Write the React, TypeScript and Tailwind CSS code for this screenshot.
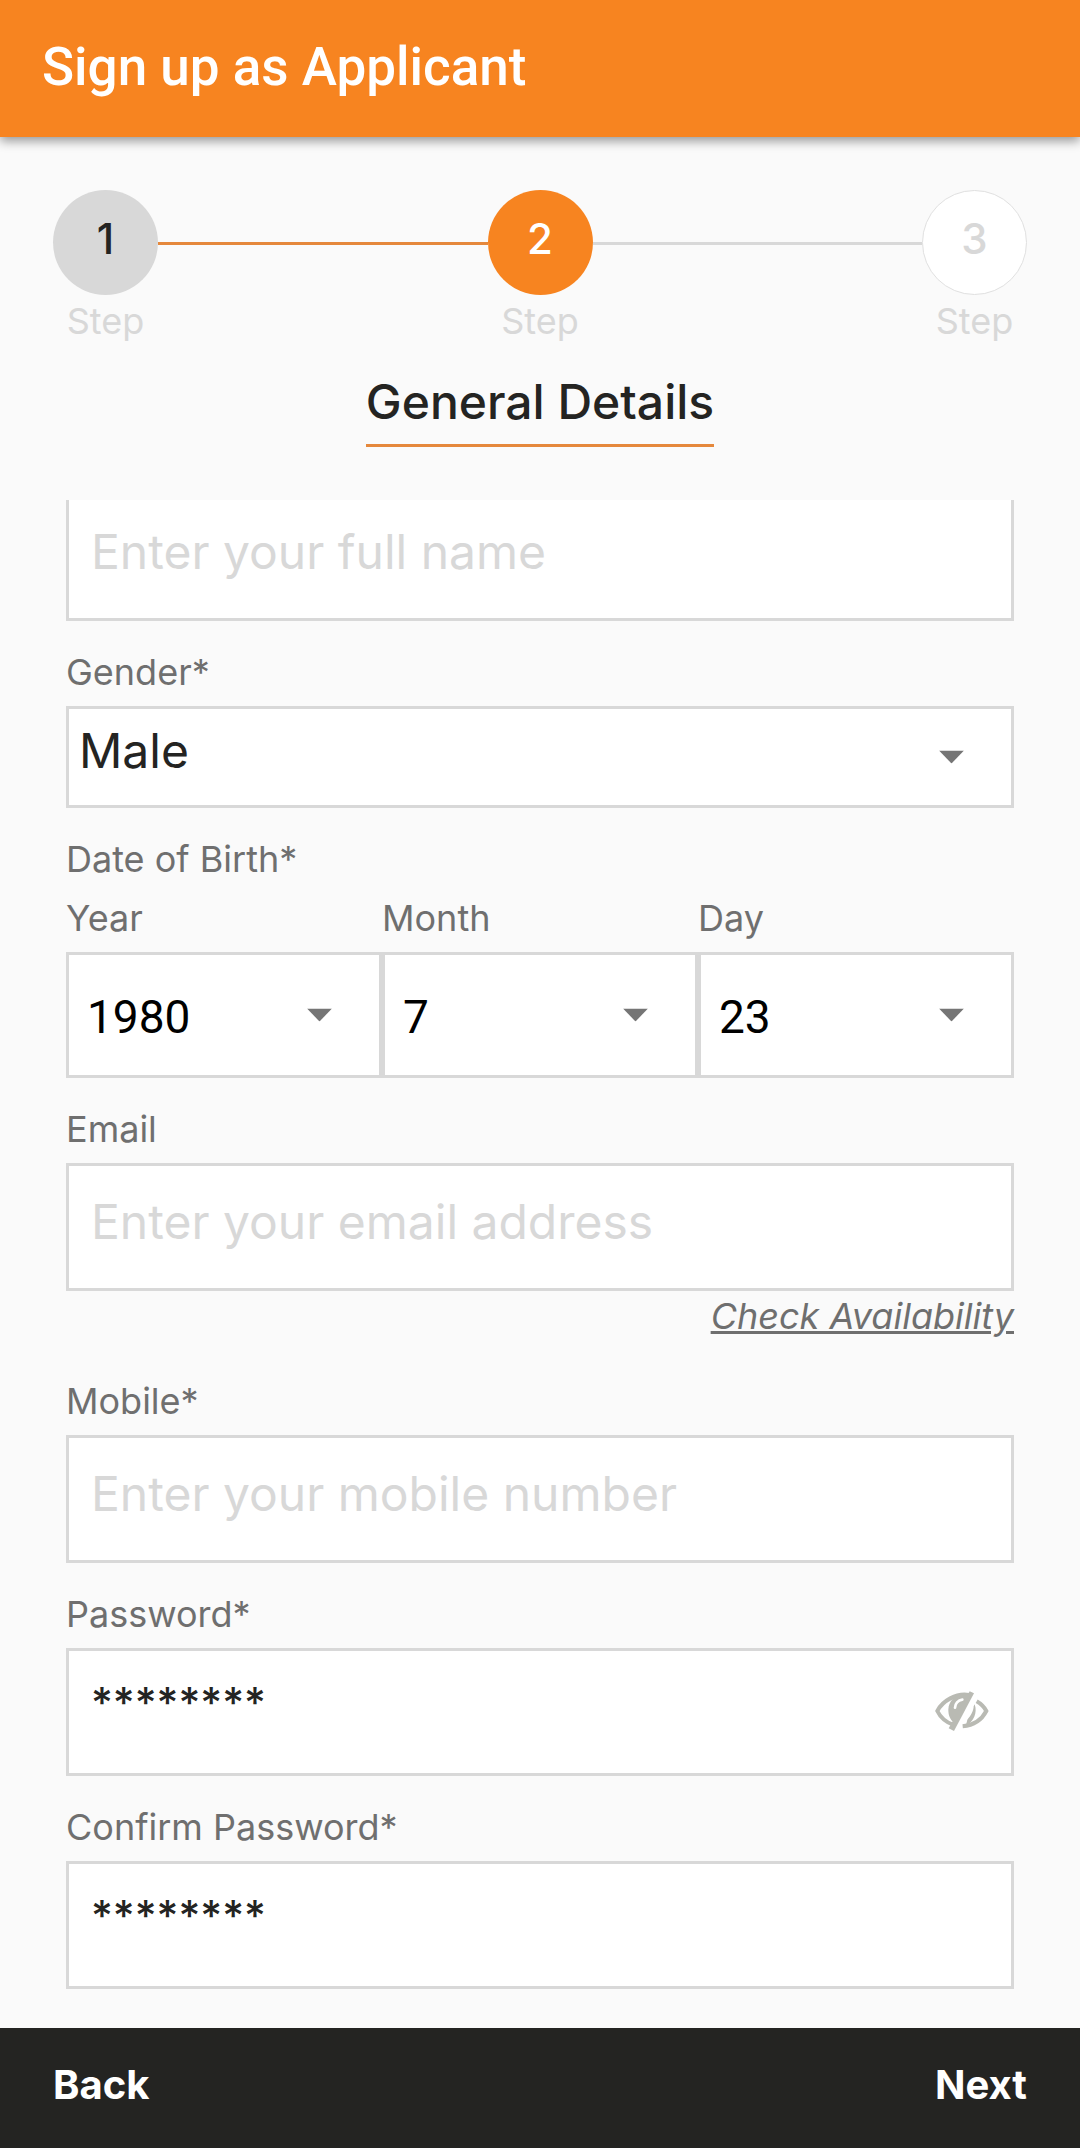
import { useLayoutEffect, useRef, useState } from 'react'
import type { ReactNode } from 'react'

const labelClass = 'block pb-[9px] text-[36px] leading-[50px] text-[#6f6f6f]'
const boxClass = 'w-full border-3 border-[#d8d8d8] bg-white outline-none'
const inputClass = `${boxClass} block h-32 px-[22px] text-[#242422] placeholder:text-[#d8d8d8]`
const textInputClass = `${inputClass} pb-3 text-[48px]`
const passwordInputClass = `${inputClass} pb-5 text-[42px] font-medium`

const steps = [
  { id: 1, state: 'done' },
  { id: 2, state: 'current' },
  { id: 3, state: 'upcoming' },
]

const circleStyles: Record<string, string> = {
  done: 'bg-[#d8d8d8] text-[#242422]',
  current: 'bg-[#f78420] text-white',
  upcoming: 'bg-white text-[#d8d8d8] border border-[#e0e0e0]',
}

function Stepper() {
  return (
    <ol className="flex items-start justify-between px-[53px] pt-[53px]">
      {steps.map((step, i) => (
        <li key={step.id} className={i > 0 ? 'flex flex-1' : 'flex'}>
          {i > 0 && (
            <div className={`mt-[52px] h-[3px] flex-1 ${step.state === 'current' ? 'bg-[#e5883c]' : 'bg-[#d8d8d8]'}`} />
          )}
          <div className="flex w-[105px] flex-col items-center">
            <div
              className={`flex h-[105px] w-full items-center justify-center rounded-full pb-2 text-[42px] font-medium ${circleStyles[step.state]}`}
            >
              {step.id}
            </div>
            <span className="text-[36px] leading-[52px] text-[#d8d8d8]">Step</span>
          </div>
        </li>
      ))}
    </ol>
  )
}

function Field({ id, label, children }: { id: string; label: string; children: ReactNode }) {
  return (
    <div className="pt-[26px]">
      <label htmlFor={id} className={labelClass}>{label}</label>
      {children}
    </div>
  )
}

interface DropdownProps {
  id: string
  value: string
  options: string[]
  className: string
}

function Dropdown({ id, value, options, className }: DropdownProps) {
  return (
    <div className="relative">
      <select id={id} defaultValue={value} className={`${boxClass} block appearance-none ${className}`}>
        {options.map((o) => (
          <option key={o}>{o}</option>
        ))}
      </select>
      <svg
        className="pointer-events-none absolute right-[50px] top-1/2 h-[13px] w-[25px] -translate-y-1/2"
        viewBox="0 0 25 13"
        fill="#757575"
      >
        <path d="M0 0h25L12.500 13z" />
      </svg>
    </div>
  )
}

function EyeOffIcon() {
  return (
    <svg className="h-10 w-[54px]" viewBox="104 94 162 120" fill="none" stroke="#b9bab3">
      <path d="M206 106C168 99 126 124 111 154C120 173 136 187 158 195" strokeWidth="12" />
      <path d="M206 104C170 98 144 122 144 150C144 168 150 180 160 188z" fill="#b9bab3" stroke="none" />
      <path d="M164 144C164 132 173 121 186 120" stroke="#fff" strokeWidth="8" strokeLinecap="round" />
      <path d="M208 95L221 101L161 214L145 206z" fill="#b9bab3" stroke="none" />
      <path d="M229 125C243 133 252 143 258 154C244 181 218 197 187 200" strokeWidth="12" />
      <path d="M223 134C232 160 220 186 196 200L201 180C212 169 220 152 220 140z" fill="#b9bab3" stroke="none" />
    </svg>
  )
}

const years = Array.from({ length: 60 }, (_, i) => String(1950 + i))
const months = Array.from({ length: 12 }, (_, i) => String(i + 1))
const days = Array.from({ length: 31 }, (_, i) => String(i + 1))

const birthFields = [
  { id: 'year', label: 'Year', value: '1980', options: years },
  { id: 'month', label: 'Month', value: '7', options: months },
  { id: 'day', label: 'Day', value: '23', options: days },
]

export default function App() {
  const listRef = useRef<HTMLDivElement>(null)
  const [password, setPassword] = useState('********')
  const [confirm, setConfirm] = useState('********')

  // Start at the end of the form, like after the keyboard closes
  useLayoutEffect(() => {
    const el = listRef.current
    if (el) el.scrollTop = el.scrollHeight
  }, [])

  return (
    <div className="flex h-screen flex-col bg-[#fafafa] font-['Inter',sans-serif]">
      <header className="flex h-[137px] shrink-0 items-center bg-[#f78420] px-[42px] pb-[2px] shadow-[0_4px_10px_rgba(0,0,0,0.4)]">
        <h1 className="font-['Roboto',sans-serif] text-[53px] font-medium text-white">Sign up as Applicant</h1>
      </header>

      <Stepper />

      <div className="flex justify-center pt-[26px] pb-[53px]">
        <h2 className="border-b-3 border-[#e5883c] pb-[13px] text-[48px] leading-[58px] font-medium text-[#242422]">
          General Details
        </h2>
      </div>

      <div ref={listRef} className="min-h-0 flex-1 overflow-y-auto px-[66px] pb-[39px] [scrollbar-width:none]">
        <input aria-label="Full name" className={textInputClass} placeholder="Enter your full name" />

        <Field id="gender" label="Gender*">
          <Dropdown
            id="gender"
            value="Male"
            options={['Male', 'Female', 'Other']}
            className="h-[102px] px-[10px] pb-3 text-[48px] text-[#242422]"
          />
        </Field>

        <fieldset className="pt-[26px]">
          <legend className="contents">
            <span className={labelClass}>Date of Birth*</span>
          </legend>
          <div className="grid grid-cols-3">
            {birthFields.map((f) => (
              <div key={f.id}>
                <label htmlFor={f.id} className={labelClass}>{f.label}</label>
                <Dropdown
                  id={f.id}
                  value={f.value}
                  options={f.options}
                  className="h-[126px] px-[18px] pt-1 font-['Roboto',sans-serif] text-[46px] text-black"
                />
              </div>
            ))}
          </div>
        </fieldset>

        <Field id="email" label="Email">
          <input id="email" type="email" className={textInputClass} placeholder="Enter your email address" />
        </Field>
        <div className="flex justify-end pb-[9px]">
          <a href="#check" className="text-[36px] leading-[50px] text-[#6f6f6f] italic underline">
            Check Availability
          </a>
        </div>

        <Field id="mobile" label="Mobile*">
          <input id="mobile" type="tel" className={textInputClass} placeholder="Enter your mobile number" />
        </Field>

        <Field id="password" label="Password*">
          <div className="relative">
            <input
              id="password"
              className={passwordInputClass}
              value={password}
              onChange={(e) => setPassword(e.target.value)}
            />
            <button type="button" aria-label="Show password" className="absolute top-[43px] right-[25px]">
              <EyeOffIcon />
            </button>
          </div>
        </Field>

        <Field id="confirm" label="Confirm Password*">
          <input
            id="confirm"
            className={passwordInputClass}
            value={confirm}
            onChange={(e) => setConfirm(e.target.value)}
          />
        </Field>
      </div>

      <footer className="flex h-[120px] shrink-0 items-center justify-between bg-[#242422] px-[53px] pb-[6px] text-[40px] font-bold text-white">
        <button type="button">Back</button>
        <button type="button">Next</button>
      </footer>
    </div>
  )
}
